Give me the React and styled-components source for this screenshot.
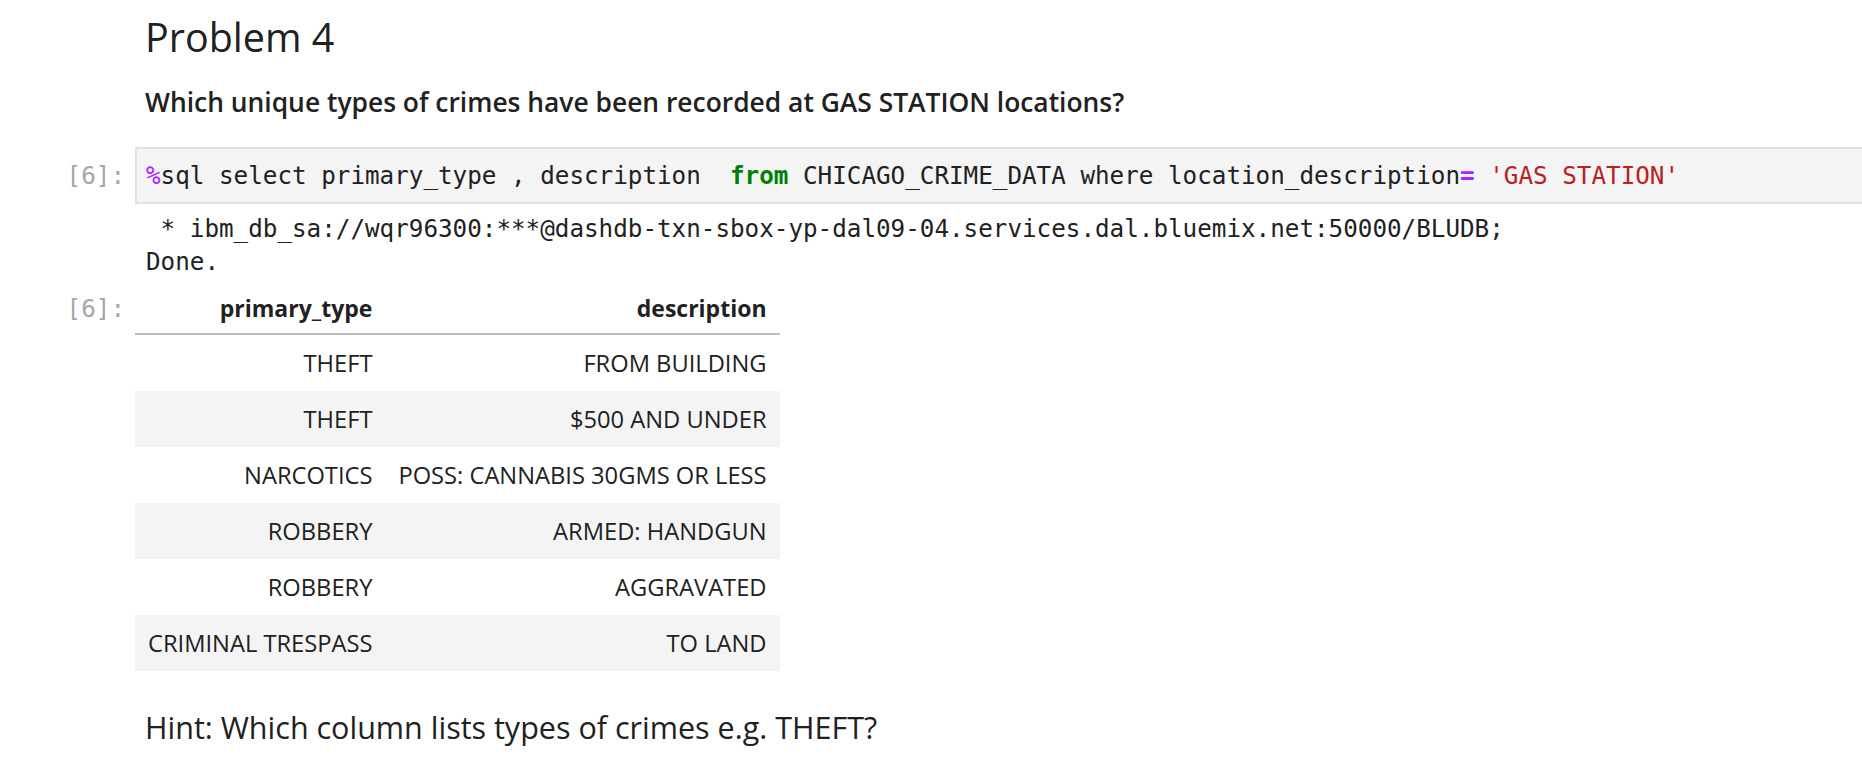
import React from "react";
import styled, { createGlobalStyle } from "styled-components";

const GlobalStyle = createGlobalStyle`
  html, body {
    margin: 0;
    padding: 0;
    background: #fff;
    overflow: hidden;
  }
`;

const MONO = `"DejaVu Sans Mono", "Liberation Mono", monospace`;
const SANS = `"Open Sans", "Noto Sans", sans-serif`;

const Notebook = styled.div`
  padding-top: 12px;
  color: #212121;
  font-family: ${SANS};
`;

const Cell = styled.div`
  display: flex;
  align-items: flex-start;
  margin-top: ${(p) => p.$mt || 0}px;
`;

const Prompt = styled.div`
  flex: none;
  width: 135px;
  box-sizing: border-box;
  padding-right: 10px;
  padding-top: ${(p) => p.$pt || 0}px;
  text-align: right;
  font-family: ${MONO};
  font-size: 24.25px;
  line-height: 33px;
  color: #a6a6a6;
`;

const Body = styled.div`
  flex: 1;
  min-width: 0;
`;

const Markdown = styled.div`
  padding-left: 10px;
`;

const Heading = styled.h2`
  margin: 0;
  font-size: 39.5px;
  font-weight: 400;
  line-height: 50px;
`;

const Question = styled.p`
  margin: 23px 0 0;
  font-size: 26.4px;
  font-weight: 600;
  line-height: 34px;
`;

const Hint = styled.p`
  margin: 0;
  font-size: 30.5px;
  font-weight: 400;
  line-height: 43px;
`;

const CodeBox = styled.div`
  background: #f4f4f4;
  border: 2px solid #e0e0e0;
  border-right-width: 0;
  padding: 10px 9px;
  font-family: ${MONO};
  font-size: 24.25px;
  line-height: 33px;
  white-space: pre;
  color: #212121;
`;

const Tok = styled.span`
  color: ${(p) =>
    p.$k === "magic" || p.$k === "op"
      ? "#aa22ff"
      : p.$k === "kw"
      ? "#008000"
      : p.$k === "str"
      ? "#ba2121"
      : "inherit"};
  font-weight: ${(p) => (p.$k === "kw" || p.$k === "op" ? 700 : 400)};
`;

const Stdout = styled.pre`
  margin: 0;
  padding-left: 11px;
  font-family: ${MONO};
  font-size: 24.25px;
  line-height: 32.5px;
  color: #212121;
`;

const Table = styled.table`
  border-collapse: collapse;
  border-spacing: 0;
  font-size: 23.7px;
  color: #212121;
`;

const Th = styled.th`
  text-align: right;
  font-size: 23px;
  font-weight: 700;
  padding: 14px 13px 11px;
  line-height: 28px;
  border-bottom: 2px solid #bdbdbd;
  white-space: nowrap;
`;

const Row = styled.tr`
  background: ${(p) => (p.$odd ? "#f4f4f4" : "transparent")};
`;

const Td = styled.td`
  text-align: right;
  padding: 14px 13px;
  line-height: 28px;
  white-space: nowrap;
`;

const rows = [
  ["THEFT", "FROM BUILDING"],
  ["THEFT", "$500 AND UNDER"],
  ["NARCOTICS", "POSS: CANNABIS 30GMS OR LESS"],
  ["ROBBERY", "ARMED: HANDGUN"],
  ["ROBBERY", "AGGRAVATED"],
  ["CRIMINAL TRESPASS", "TO LAND"],
];

export default function App() {
  return (
    <>
      <GlobalStyle />
      <Notebook>
        <Cell>
          <Prompt />
          <Body>
            <Markdown>
              <Heading>Problem 4</Heading>
              <Question>
                Which unique types of crimes have been recorded at GAS STATION locations?
              </Question>
            </Markdown>
          </Body>
        </Cell>

        <Cell $mt={28}>
          <Prompt $pt={12}>[6]:</Prompt>
          <Body>
            <CodeBox>
              <Tok $k="magic">%</Tok>sql select primary_type , description  <Tok $k="kw">from</Tok>{" "}
              CHICAGO_CRIME_DATA where location_description<Tok $k="op">=</Tok>{" "}
              <Tok $k="str">'GAS STATION'</Tok>
            </CodeBox>
          </Body>
        </Cell>

        <Cell $mt={9}>
          <Prompt />
          <Body>
            <Stdout>
              {" * ibm_db_sa://wqr96300:***@dashdb-txn-sbox-yp-dal09-04.services.dal.bluemix.net:50000/BLUDB;\nDone."}
            </Stdout>
          </Body>
        </Cell>

        <Cell $mt={2}>
          <Prompt $pt={12}>[6]:</Prompt>
          <Body>
            <Table>
              <thead>
                <tr>
                  <Th>primary_type</Th>
                  <Th>description</Th>
                </tr>
              </thead>
              <tbody>
                {rows.map((r, i) => (
                  <Row key={i} $odd={i % 2 === 1}>
                    <Td>{r[0]}</Td>
                    <Td>{r[1]}</Td>
                  </Row>
                ))}
              </tbody>
            </Table>
          </Body>
        </Cell>

        <Cell $mt={35}>
          <Prompt />
          <Body>
            <Markdown>
              <Hint>Hint: Which column lists types of crimes e.g. THEFT?</Hint>
            </Markdown>
          </Body>
        </Cell>
      </Notebook>
    </>
  );
}
